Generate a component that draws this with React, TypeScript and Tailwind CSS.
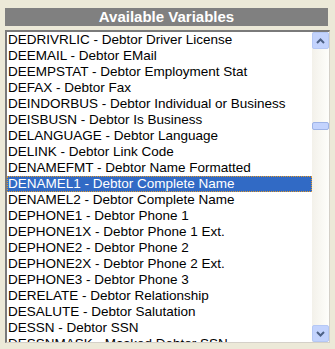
const items = [
  'DEDRIVRLIC - Debtor Driver License',
  'DEEMAIL - Debtor EMail',
  'DEEMPSTAT - Debtor Employment Stat',
  'DEFAX - Debtor Fax',
  'DEINDORBUS - Debtor Individual or Business',
  'DEISBUSN - Debtor Is Business',
  'DELANGUAGE - Debtor Language',
  'DELINK - Debtor Link Code',
  'DENAMEFMT - Debtor Name Formatted',
  'DENAMEL1 - Debtor Complete Name',
  'DENAMEL2 - Debtor Complete Name',
  'DEPHONE1 - Debtor Phone 1',
  'DEPHONE1X - Debtor Phone 1 Ext.',
  'DEPHONE2 - Debtor Phone 2',
  'DEPHONE2X - Debtor Phone 2 Ext.',
  'DEPHONE3 - Debtor Phone 3',
  'DERELATE - Debtor Relationship',
  'DESALUTE - Debtor Salutation',
  'DESSN - Debtor SSN',
  'DESSNMASK - Masked Debtor SSN',
];

const selected = 9;

function ArrowButton({ up }: { up: boolean }) {
  return (
    <div className="flex h-[17px] w-[17px] items-center justify-center rounded-[2px] border border-[#B5C8F5] bg-[#C3D3FD]">
      <svg width="9" height="6" viewBox="0 0 9 6">
        <path
          d={up ? 'M1 5 L4.5 1.5 L8 5' : 'M1 1 L4.5 4.5 L8 1'}
          fill="none"
          stroke="#4D6185"
          strokeWidth="2"
        />
      </svg>
    </div>
  );
}

export default function App() {
  return (
    <div
      className="h-[349px] w-[335px] overflow-hidden bg-[#ECE9D8] px-[5px] pt-[8px]"
      style={{ fontFamily: '"Liberation Sans", Arial, sans-serif' }}
    >
      <div className="flex h-[18px] w-[323px] items-center justify-center bg-[#808080] text-[15px] font-bold text-white">
        Available Variables
      </div>
      <div className="mt-[4px] flex h-[313px] w-[325px] border-t-2 border-l-2 border-b border-r border-t-[#7A7A7A] border-l-[#7A7A7A] border-b-[#D4D0C8] border-r-[#D4D0C8] bg-white">
        <div className="flex-1 overflow-hidden">
          {items.map((item, i) => (
            <div
              key={item}
              className={
                i === selected
                  ? 'h-[16px] whitespace-nowrap border border-dotted border-[#E39A2B] bg-[#316AC5] pl-[0px] text-[13.5px] leading-[14px] text-white'
                  : 'h-[16px] whitespace-nowrap pl-[1px] text-[13.5px] leading-[16px] text-black'
              }
            >
              {item}
            </div>
          ))}
        </div>
        <div className="flex w-[17px] flex-col justify-between bg-gradient-to-r from-[#F3F1EA] to-[#FEFEFB]">
          <div>
            <ArrowButton up />
            <div className="mt-[73px] h-[8px] w-[17px] rounded-[2px] border border-[#9EB3E6] bg-[#C3D3FD]" />
          </div>
          <ArrowButton up={false} />
        </div>
      </div>
    </div>
  );
}
